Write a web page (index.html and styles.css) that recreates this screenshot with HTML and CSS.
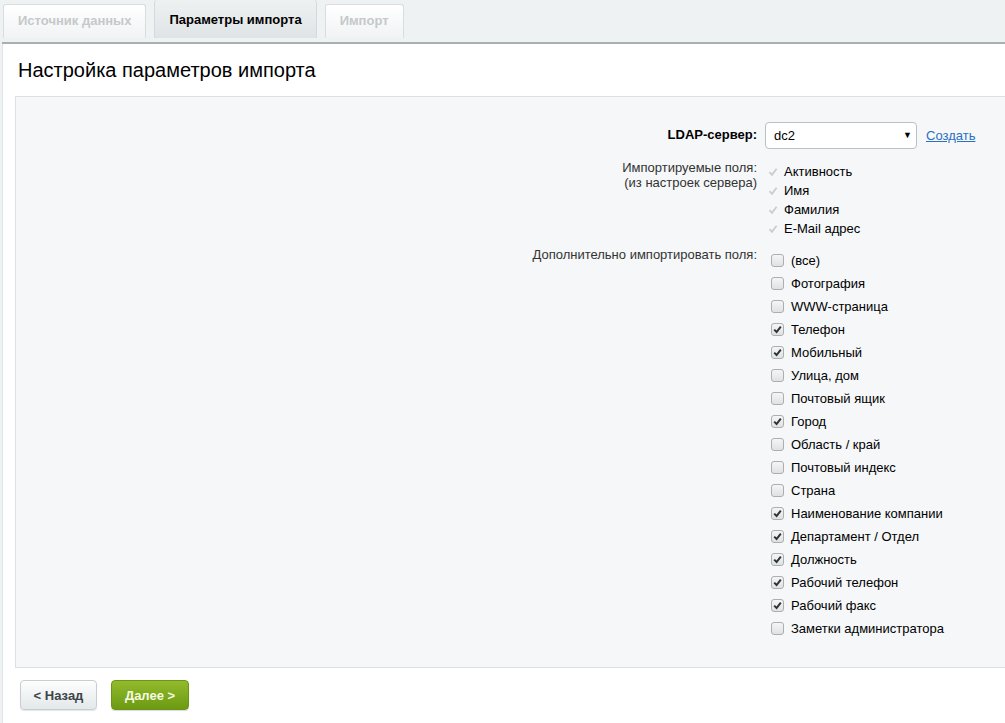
FILE: index.html
```html
<!DOCTYPE html>
<html lang="ru">
<head>
  <meta charset="UTF-8">
  <title>Настройка параметров импорта</title>
  <link rel="stylesheet" href="styles.css">
</head>
<body>
  <div class="tabs">
    <div class="tab">Источник данных</div>
    <div class="tab active">Параметры импорта</div>
    <div class="tab">Импорт</div>
  </div>

  <div class="panel">
    <div class="title">Настройка параметров импорта</div>

    <div class="form-box">
      <!-- LDAP server -->
      <div class="row row-server">
        <div class="label bold">LDAP-сервер:</div>
        <div class="field server-field">
          <div class="select">dc2<span class="arrow">&#9660;</span></div>
          <a href="#" class="link">Создать</a>
        </div>
      </div>

      <!-- fields from server settings -->
      <div class="row row-fixed">
        <div class="label small-lines">Импортируемые поля:<br>(из настроек сервера)</div>
        <div class="field">
          <div class="fixed-item"><svg class="tick" viewBox="0 0 10 10"><path d="M1.5 5.2 L4 7.8 L8.6 1.8"/></svg>Активность</div>
          <div class="fixed-item"><svg class="tick" viewBox="0 0 10 10"><path d="M1.5 5.2 L4 7.8 L8.6 1.8"/></svg>Имя</div>
          <div class="fixed-item"><svg class="tick" viewBox="0 0 10 10"><path d="M1.5 5.2 L4 7.8 L8.6 1.8"/></svg>Фамилия</div>
          <div class="fixed-item"><svg class="tick" viewBox="0 0 10 10"><path d="M1.5 5.2 L4 7.8 L8.6 1.8"/></svg>E-Mail адрес</div>
        </div>
      </div>

      <!-- additional fields -->
      <div class="row row-extra">
        <div class="label small-lines">Дополнительно импортировать поля:</div>
        <div class="field">
          <label class="check"><span class="box"></span>(все)</label>
          <label class="check"><span class="box"></span>Фотография</label>
          <label class="check"><span class="box"></span>WWW-страница</label>
          <label class="check"><span class="box on"><svg viewBox="0 0 13 13"><path d="M3.2 6.6 L5.6 9 L9.8 3.6"/></svg></span>Телефон</label>
          <label class="check"><span class="box on"><svg viewBox="0 0 13 13"><path d="M3.2 6.6 L5.6 9 L9.8 3.6"/></svg></span>Мобильный</label>
          <label class="check"><span class="box"></span>Улица, дом</label>
          <label class="check"><span class="box"></span>Почтовый ящик</label>
          <label class="check"><span class="box on"><svg viewBox="0 0 13 13"><path d="M3.2 6.6 L5.6 9 L9.8 3.6"/></svg></span>Город</label>
          <label class="check"><span class="box"></span>Область / край</label>
          <label class="check"><span class="box"></span>Почтовый индекс</label>
          <label class="check"><span class="box"></span>Страна</label>
          <label class="check"><span class="box on"><svg viewBox="0 0 13 13"><path d="M3.2 6.6 L5.6 9 L9.8 3.6"/></svg></span>Наименование компании</label>
          <label class="check"><span class="box on"><svg viewBox="0 0 13 13"><path d="M3.2 6.6 L5.6 9 L9.8 3.6"/></svg></span>Департамент / Отдел</label>
          <label class="check"><span class="box on"><svg viewBox="0 0 13 13"><path d="M3.2 6.6 L5.6 9 L9.8 3.6"/></svg></span>Должность</label>
          <label class="check"><span class="box on"><svg viewBox="0 0 13 13"><path d="M3.2 6.6 L5.6 9 L9.8 3.6"/></svg></span>Рабочий телефон</label>
          <label class="check"><span class="box on"><svg viewBox="0 0 13 13"><path d="M3.2 6.6 L5.6 9 L9.8 3.6"/></svg></span>Рабочий факс</label>
          <label class="check"><span class="box"></span>Заметки администратора</label>
        </div>
      </div>
    </div>

    <div class="buttons">
      <button class="btn btn-back">&lt; Назад</button>
      <button class="btn btn-next">Далее &gt;</button>
    </div>
  </div>
</body>
</html>
```
FILE: styles.css
```css
body {
  margin: 0;
  padding-left: 2px;
  background: #eef2f3;
  font-family: "Liberation Sans", Arial, sans-serif;
  font-size: 13px;
  color: #000;
  overflow: hidden;
}

/* Tabs */
.tabs {
  display: flex;
  gap: 8px;
  height: 42px;
  padding-left: 1px;
  border-bottom: 2px solid #a9b0b3;
}

.tab {
  box-sizing: border-box;
  height: 34px;
  margin-top: 4px;
  padding: 0 14px;
  line-height: 32px;
  font-weight: bold;
  color: #c4c9cb;
  background: linear-gradient(#ffffff, #f1f3f4);
  border: 1px solid #d8dde0;
  border-bottom: none;
  border-radius: 3px 3px 0 0;
}

.tab.active {
  height: 38px;
  margin-top: 0;
  padding: 0 14px;
  line-height: 40px;
  color: #000;
  background: linear-gradient(#eef1f2, #dfe4e6);
  border-color: #d3d9dc;
  border-top: none;
}

/* Panel */
.panel {
  background: #fff;
  border-left: 1px solid #dfe4e6;
  min-height: 700px;
  padding-top: 14px;
}

.title {
  font-size: 20px;
  line-height: 24px;
  padding-left: 15px;
  margin-bottom: 14px;
}

.form-box {
  margin-left: 12px;
  padding: 25px 0 27px;
  background: #f5f7f8;
  border: 1px solid #dce1e3;
  border-right: none;
}

.row {
  display: grid;
  grid-template-columns: 741px 1fr;
  column-gap: 8px;
}

.label {
  text-align: right;
  color: #333;
}

.bold {
  font-weight: bold;
  color: #000;
  line-height: 26px;
}

.small-lines {
  line-height: 15px;
  margin-top: -2px;
}

/* LDAP select */
.server-field {
  display: flex;
  align-items: center;
  gap: 9px;
}

.select {
  box-sizing: border-box;
  position: relative;
  width: 152px;
  height: 27px;
  padding-left: 8px;
  line-height: 25px;
  background: #fff;
  border: 1px solid #b9c1c4;
  border-radius: 4px;
}

.arrow {
  position: absolute;
  right: 4px;
  top: 0;
  font-size: 9px;
}

.link {
  color: #2a70c4;
  text-decoration: underline;
}

/* Imported fields */
.row-fixed {
  margin-top: 13px;
}

.fixed-item {
  display: flex;
  align-items: center;
  line-height: 19px;
  margin-left: 3px;
}

.tick {
  width: 10px;
  height: 10px;
  margin-right: 6px;
  fill: none;
  stroke: #c9cdcf;
  stroke-width: 1.8;
}

/* Additional fields */
.row-extra {
  margin-top: 11px;
}

.check {
  display: flex;
  align-items: center;
  line-height: 23px;
  margin-left: 6px;
}

.box {
  box-sizing: border-box;
  width: 13px;
  height: 13px;
  margin-right: 7px;
  background: linear-gradient(#f4f5f6, #dfe2e4);
  border: 1px solid #a9afb2;
  border-radius: 3px;
}

.box svg {
  display: block;
  width: 13px;
  height: 13px;
  margin: -1px;
  fill: none;
  stroke: #2f3335;
  stroke-width: 2;
}

/* Buttons */
.buttons {
  display: flex;
  gap: 14px;
  padding: 12px 0 0 17px;
}

.btn {
  height: 30px;
  padding: 0;
  white-space: nowrap;
  font-family: "Liberation Sans", Arial, sans-serif;
  font-size: 13px;
  font-weight: bold;
  border-radius: 4px;
  cursor: pointer;
}

.btn-back {
  width: 77px;
  color: #3d4447;
  background: linear-gradient(#fdfefe, #e3e8ea);
  border: 1px solid #c7ced1;
  box-shadow: 0 1px 1px rgba(0, 0, 0, 0.1);
}

.btn-next {
  width: 78px;
  color: #f5fae0;
  background: linear-gradient(#93ba2c, #6c9a12);
  border: 1px solid #6a9516;
  box-shadow: 0 1px 1px rgba(0, 0, 0, 0.15);
}
```
